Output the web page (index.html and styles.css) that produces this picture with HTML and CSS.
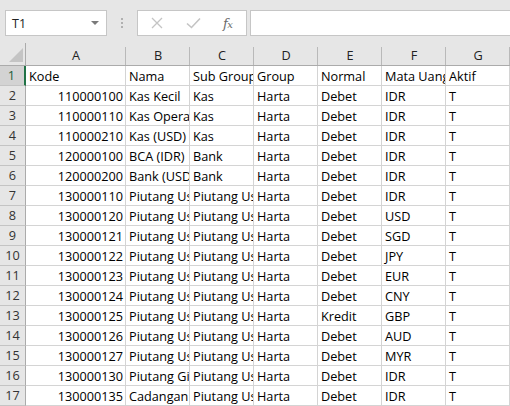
FILE: index.html
```html
<!DOCTYPE html>
<html>
<head>
<meta charset="utf-8">
<link rel="stylesheet" href="styles.css">
</head>
<body>
<div class="toolbar">
  <div class="namebox">
    <span class="nb-text">T1</span>
    <svg class="nb-arrow" width="8" height="4" viewBox="0 0 8 4"><path d="M0 0H8L4 4Z" fill="#7a7a7a"/></svg>
  </div>
  <div class="grip">
    <svg width="3" height="11" viewBox="0 0 3 11"><rect x="0" y="0" width="2" height="2" fill="#b0b0b0"/><rect x="0" y="4" width="2" height="2" fill="#b0b0b0"/><rect x="0" y="8" width="2" height="2" fill="#b0b0b0"/></svg>
  </div>
  <div class="fxbtns">
    <svg class="btn-x" width="12" height="12" viewBox="0 0 12 12"><path d="M1 1L11 11M11 1L1 11" stroke="#c4c4c4" stroke-width="1.3" fill="none"/></svg>
    <svg class="btn-ok" width="15" height="12" viewBox="0 0 15 12"><path d="M1 6.5L5.5 10.5L14 1.5" stroke="#c4c4c4" stroke-width="1.6" fill="none"/></svg>
    <span class="fx">f<span class="fx-x">x</span></span>
  </div>
  <div class="formula"></div>
</div>

<div class="sheet">
  <div class="corner"><svg width="14" height="14" viewBox="0 0 14 14"><path d="M14 0V14H0Z" fill="#c4c4c4"/></svg></div>
  <div class="ch">A</div><div class="ch">B</div><div class="ch">C</div><div class="ch">D</div><div class="ch">E</div><div class="ch">F</div><div class="ch">G</div><div class="ch ch-last"></div>

  <div class="rh rh-sel">1</div><div class="c">Kode</div><div class="c">Nama</div><div class="c">Sub Group</div><div class="c">Group</div><div class="c">Normal</div><div class="c">Mata Uang</div><div class="c">Aktif</div><div class="c"></div>

  <div class="rh">2</div><div class="c n">110000100</div><div class="c">Kas Kecil</div><div class="c">Kas</div><div class="c">Harta</div><div class="c">Debet</div><div class="c">IDR</div><div class="c">T</div><div class="c"></div>
  <div class="rh">3</div><div class="c n">110000110</div><div class="c">Kas Operasional</div><div class="c">Kas</div><div class="c">Harta</div><div class="c">Debet</div><div class="c">IDR</div><div class="c">T</div><div class="c"></div>
  <div class="rh">4</div><div class="c n">110000210</div><div class="c">Kas (USD)</div><div class="c">Kas</div><div class="c">Harta</div><div class="c">Debet</div><div class="c">IDR</div><div class="c">T</div><div class="c"></div>
  <div class="rh">5</div><div class="c n">120000100</div><div class="c">BCA (IDR)</div><div class="c">Bank</div><div class="c">Harta</div><div class="c">Debet</div><div class="c">IDR</div><div class="c">T</div><div class="c"></div>
  <div class="rh">6</div><div class="c n">120000200</div><div class="c">Bank (USD)</div><div class="c">Bank</div><div class="c">Harta</div><div class="c">Debet</div><div class="c">IDR</div><div class="c">T</div><div class="c"></div>
  <div class="rh">7</div><div class="c n">130000110</div><div class="c">Piutang Usaha</div><div class="c">Piutang Usaha</div><div class="c">Harta</div><div class="c">Debet</div><div class="c">IDR</div><div class="c">T</div><div class="c"></div>
  <div class="rh">8</div><div class="c n">130000120</div><div class="c">Piutang Usaha</div><div class="c">Piutang Usaha</div><div class="c">Harta</div><div class="c">Debet</div><div class="c">USD</div><div class="c">T</div><div class="c"></div>
  <div class="rh">9</div><div class="c n">130000121</div><div class="c">Piutang Usaha</div><div class="c">Piutang Usaha</div><div class="c">Harta</div><div class="c">Debet</div><div class="c">SGD</div><div class="c">T</div><div class="c"></div>
  <div class="rh">10</div><div class="c n">130000122</div><div class="c">Piutang Usaha</div><div class="c">Piutang Usaha</div><div class="c">Harta</div><div class="c">Debet</div><div class="c">JPY</div><div class="c">T</div><div class="c"></div>
  <div class="rh">11</div><div class="c n">130000123</div><div class="c">Piutang Usaha</div><div class="c">Piutang Usaha</div><div class="c">Harta</div><div class="c">Debet</div><div class="c">EUR</div><div class="c">T</div><div class="c"></div>
  <div class="rh">12</div><div class="c n">130000124</div><div class="c">Piutang Usaha</div><div class="c">Piutang Usaha</div><div class="c">Harta</div><div class="c">Debet</div><div class="c">CNY</div><div class="c">T</div><div class="c"></div>
  <div class="rh">13</div><div class="c n">130000125</div><div class="c">Piutang Usaha</div><div class="c">Piutang Usaha</div><div class="c">Harta</div><div class="c">Kredit</div><div class="c">GBP</div><div class="c">T</div><div class="c"></div>
  <div class="rh">14</div><div class="c n">130000126</div><div class="c">Piutang Usaha</div><div class="c">Piutang Usaha</div><div class="c">Harta</div><div class="c">Debet</div><div class="c">AUD</div><div class="c">T</div><div class="c"></div>
  <div class="rh">15</div><div class="c n">130000127</div><div class="c">Piutang Usaha</div><div class="c">Piutang Usaha</div><div class="c">Harta</div><div class="c">Debet</div><div class="c">MYR</div><div class="c">T</div><div class="c"></div>
  <div class="rh">16</div><div class="c n">130000130</div><div class="c">Piutang Giro</div><div class="c">Piutang Usaha</div><div class="c">Harta</div><div class="c">Debet</div><div class="c">IDR</div><div class="c">T</div><div class="c"></div>
  <div class="rh">17</div><div class="c n">130000135</div><div class="c">Cadangan Piutang</div><div class="c">Piutang Usaha</div><div class="c">Harta</div><div class="c">Debet</div><div class="c">IDR</div><div class="c">T</div><div class="c"></div>
</div>
</body>
</html>
```

FILE: styles.css
```css
html, body {
  margin: 0;
  padding: 0;
  background: #ffffff;
  overflow: hidden;
}
body {
  width: 510px;
  height: 406px;
  font-family: "Open Sans", "Noto Sans", sans-serif;
}

/* toolbar */
.toolbar {
  height: 43px;
  box-sizing: border-box;
  background: #e6e6e6;
  display: flex;
  align-items: flex-start;
  padding: 10px 0 0 5px;
}
.namebox {
  width: 102px;
  height: 26px;
  box-sizing: border-box;
  background: #ffffff;
  border: 1px solid #c6c6c6;
  display: flex;
  align-items: center;
  justify-content: space-between;
  padding: 0 7px 0 6px;
}
.nb-text {
  font-size: 12.5px;
  color: #222;
}
.nb-arrow {
  display: block;
}
.grip {
  width: 30px;
  height: 26px;
  display: flex;
  align-items: center;
  justify-content: center;
}
.grip svg { display: block; margin-left: 1px; }
.fxbtns {
  width: 110px;
  height: 26px;
  box-sizing: border-box;
  background: #ffffff;
  border: 1px solid #c6c6c6;
  display: flex;
  align-items: center;
  padding-left: 13px;
}
.btn-x { display: block; }
.btn-ok { display: block; margin-left: 23px; }
.fx {
  margin-left: 22px;
  font-family: "DejaVu Serif", "Liberation Serif", serif;
  font-style: italic;
  font-size: 13px;
  color: #6a6a6a;
  letter-spacing: -0.5px;
}
.fx-x { font-size: 10px; }
.formula {
  flex: 1;
  margin-left: 3px;
  height: 26px;
  box-sizing: border-box;
  background: #ffffff;
  border: 1px solid #c6c6c6;
  border-right: none;
}

/* sheet */
.sheet {
  display: grid;
  grid-template-columns: 26px 100px repeat(6, 64px) 1fr;
  grid-template-rows: 23px repeat(17, 20px);
  font-size: 12.7px;
  color: #000;
}
.corner {
  background: #e6e6e6;
  border-right: 1px solid #ababab;
  border-bottom: 1px solid #ababab;
  box-sizing: border-box;
  display: flex;
  align-items: flex-end;
  justify-content: flex-end;
  padding: 0 2px 3px 0;
}
.corner svg { display: block; }
.ch {
  background-color: #e6e6e6;
  background-image: linear-gradient(#b9b9b9, #b9b9b9);
  background-size: 1px calc(100% - 4px);
  background-position: right bottom;
  background-repeat: no-repeat;
  border-bottom: 1px solid #ababab;
  box-sizing: border-box;
  text-align: center;
  line-height: 24px;
  font-size: 12.7px;
  color: #222;
}
.ch-last { background-image: none; }
.rh {
  background: #e6e6e6;
  border-right: 1px solid #ababab;
  border-bottom: 1px solid #c4c4c4;
  box-sizing: border-box;
  text-align: center;
  line-height: 19px;
  font-size: 12.7px;
  color: #333;
}
.rh-sel {
  background: #d3d3d3;
  border-right: 2px solid #217346;
  color: #1d5c38;
  padding-right: 1px;
}
.c {
  border-right: 1px solid #d4d4d4;
  border-bottom: 1px solid #d4d4d4;
  box-sizing: border-box;
  line-height: 19px;
  padding: 1px 2px 0 3px;
  white-space: nowrap;
  overflow: hidden;
}
.n {
  text-align: right;
  padding-right: 2px;
}
```
